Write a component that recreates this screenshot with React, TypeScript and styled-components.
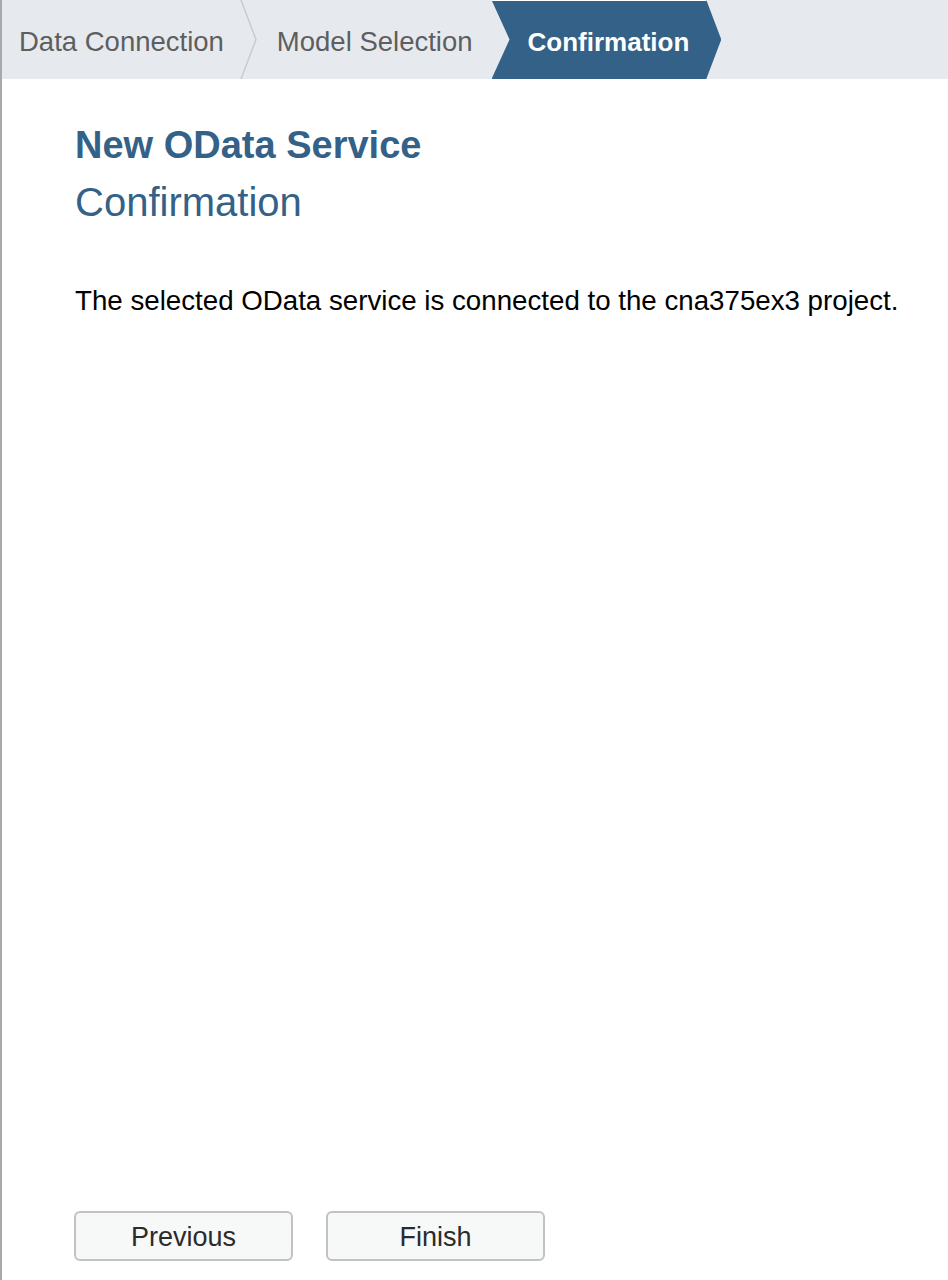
import React from "react";
import styled, { createGlobalStyle } from "styled-components";

const Global = createGlobalStyle`
  html, body { margin: 0; padding: 0; background: #ffffff; }
  body { font-family: "Liberation Sans", Arial, sans-serif; }
  * { box-sizing: border-box; }
`;

const Page = styled.div`
  width: 948px;
  height: 1280px;
  display: flex;
  flex-direction: column;
  border-left: 2px solid #a9a9a9;
  background: #ffffff;
  overflow: hidden;
`;

const Stepper = styled.nav`
  height: 79px;
  flex: none;
  display: flex;
  align-items: stretch;
  background: #e6eaee;
`;

const Step = styled.div<{ $active?: boolean }>`
  display: flex;
  align-items: center;
  white-space: nowrap;
  font-size: ${(p) => (p.$active ? "26px" : "27.5px")};
  color: ${(p) => (p.$active ? "#ffffff" : "#5e5e5e")};
  font-weight: ${(p) => (p.$active ? 700 : 400)};
  padding: ${(p) => (p.$active ? "4px 32px 0 36px" : "4px 19px 0 17px")};
  background: ${(p) => (p.$active ? "#346187" : "transparent")};
  clip-path: ${(p) =>
    p.$active
      ? "polygon(0 0, calc(100% - 15px) 0, 100% 50%, calc(100% - 15px) 100%, 0 100%, 18px 50%)"
      : "none"};
  border-top: ${(p) => (p.$active ? "1px solid #ffffff" : "none")};
`;

const Separator = styled.svg`
  width: 18px;
  height: 79px;
  margin-left: -3px;
  margin-right: 2px;
  flex: none;
`;

const Content = styled.main`
  flex: 1;
  display: flex;
  flex-direction: column;
  padding: 44px 0 19px 73px;
`;

const Title = styled.h1`
  margin: 0;
  font-size: 38px;
  line-height: 44px;
  font-weight: 700;
  color: #346187;
`;

const Subtitle = styled.h2`
  margin: 12px 0 0;
  font-size: 40px;
  line-height: 46px;
  font-weight: 400;
  color: #346187;
`;

const Message = styled.p`
  margin: 60px 0 0;
  font-size: 27.7px;
  line-height: 32px;
  color: #000000;
`;

const Footer = styled.div`
  margin-top: auto;
  margin-left: -1px;
  display: flex;
  gap: 33px;
`;

const Button = styled.button`
  width: 219px;
  height: 50px;
  padding: 3px 0 0;
  border: 2px solid #c2c2c2;
  border-radius: 6px;
  background: #f7f8f8;
  font-family: "Liberation Sans", Arial, sans-serif;
  font-size: 27px;
  color: #2b2b2b;
  cursor: pointer;
`;

const Chevron = () => (
  <Separator viewBox="0 0 18 79" aria-hidden="true">
    <polyline points="1,0 16,39.5 1,79" fill="none" stroke="#c6ccd2" strokeWidth="1.5" />
  </Separator>
);

export default function App() {
  return (
    <>
      <Global />
      <Page>
        <Stepper>
          <Step>Data Connection</Step>
          <Chevron />
          <Step>Model Selection</Step>
          <Step $active>Confirmation</Step>
        </Stepper>
        <Content>
          <Title>New OData Service</Title>
          <Subtitle>Confirmation</Subtitle>
          <Message>The selected OData service is connected to the cna375ex3 project.</Message>
          <Footer>
            <Button>Previous</Button>
            <Button>Finish</Button>
          </Footer>
        </Content>
      </Page>
    </>
  );
}
